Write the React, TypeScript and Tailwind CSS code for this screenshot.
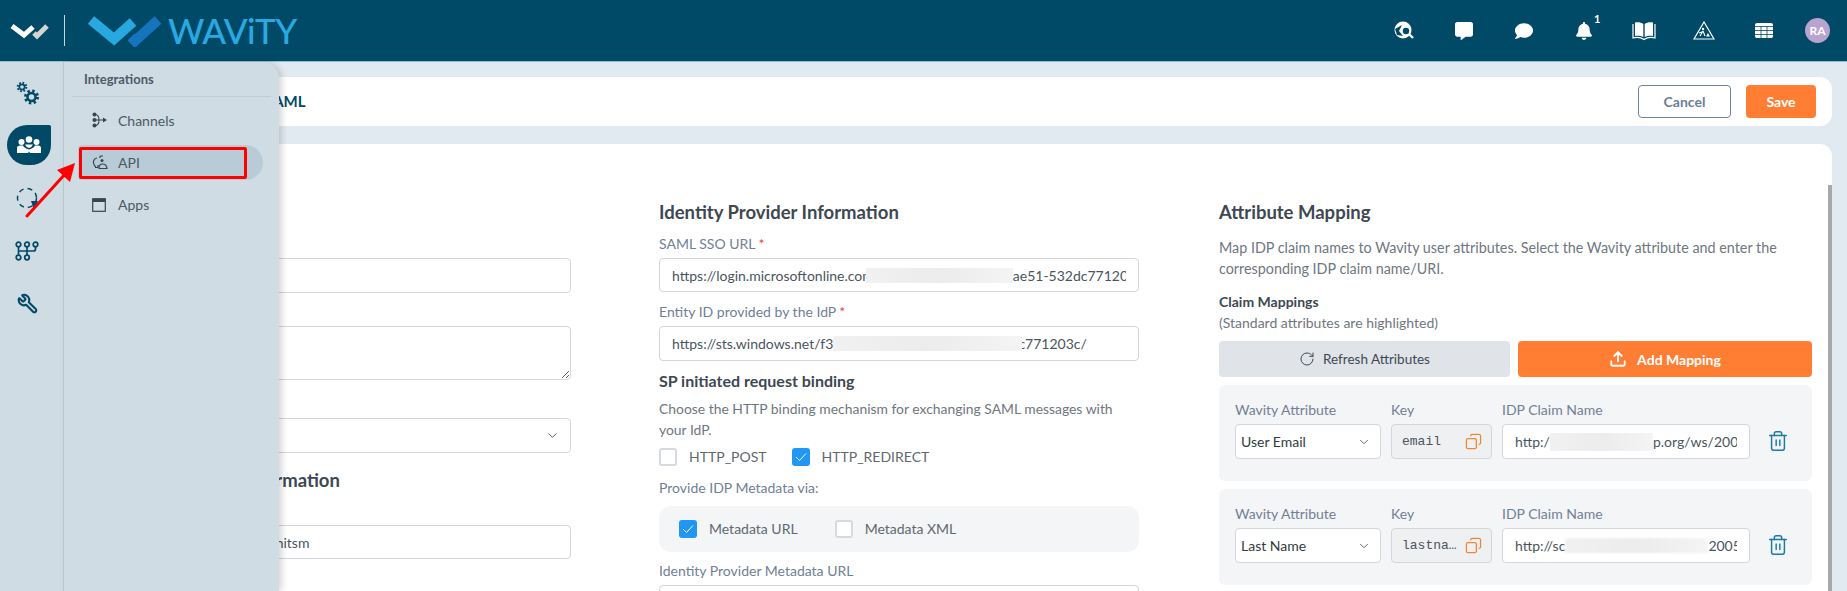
import React from "react";
import { ChevronDown, Copy, RotateCw, Trash2, Upload, Wrench } from "lucide-react";
import { FaBell, FaCommentAlt, FaComment } from "react-icons/fa";

const navy = "#004a68";

function Gear({ cx, cy, r }: { cx: number; cy: number; r: number }) {
  const teeth = 8;
  const c = 2 * Math.PI * (r + 1);
  return (
    <g fill="none" stroke={navy}>
      <circle cx={cx} cy={cy} r={r + 1} strokeWidth={r * 0.6} strokeDasharray={`${c / teeth / 2} ${c / teeth / 2}`} />
      <circle cx={cx} cy={cy} r={r * 0.8} strokeWidth={r * 0.5} />
    </g>
  );
}

function Logo() {
  return (
    <div className="flex items-center">
      <svg width="40" height="20" viewBox="0 0 40 20" className="ml-[10px]">
        <path d="M2 5 L14 14 L23 6" fill="none" stroke="#fff" strokeWidth="5" />
        <path d="M24 12 L27 15 L37 5" fill="none" stroke="#d4d4d4" strokeWidth="5" />
      </svg>
      <div className="ml-[14px] h-[31px] w-px bg-[#c9d6dc]" />
      <svg width="78" height="32" viewBox="0 0 78 32" className="ml-[22px]">
        <path d="M4 5 L27 24 L46 7" fill="none" stroke="#27a8e0" strokeWidth="10" />
        <path d="M44 22 L48 26 L71 5" fill="none" stroke="#1474bd" strokeWidth="10" />
      </svg>
      <span className="ml-[3px] font-['Lato'] text-[35px] leading-none font-medium tracking-[-0.5px] text-[#29a9e1]">WAViTY</span>
    </div>
  );
}

function TopIcons() {
  return (
    <div className="flex items-center pr-[17px] text-white">
      <div className="flex w-[60px] justify-center">
        <svg width="20" height="20" viewBox="0 0 20 20">
          <circle cx="9" cy="9" r="8.5" fill="#fff" />
          <path d="M1 8 L8 4 L5 10 L9 15 L3 14 Z" fill={navy} />
          <circle cx="12" cy="10" r="4" fill={navy} stroke="#fff" strokeWidth="1.6" />
          <path d="M15 13 L19 17" stroke="#fff" strokeWidth="2.4" />
        </svg>
      </div>
      <div className="flex w-[60px] justify-center"><FaCommentAlt size={18} /></div>
      <div className="flex w-[60px] justify-center"><FaComment size={18} /></div>
      <div className="relative flex w-[60px] justify-center">
        <FaBell size={18} />
        <span className="absolute top-[-11px] left-[40px] font-['Lato'] text-[11px] font-bold">1</span>
      </div>
      <div className="flex w-[60px] justify-center">
        <svg width="24" height="20" viewBox="0 0 24 20" fill="none">
          <path d="M1 3 V17 C5 16 9 16.500 12 18.500 C15 16.500 19 16 23 17 V3" stroke="#fff" strokeWidth="1.200" />
          <path d="M3 1.500 C6 1 9.500 1.500 11.300 3 V16 C9 14.800 6 14.500 3 15 Z M21 1.500 C18 1 14.500 1.500 12.700 3 V16 C15 14.800 18 14.500 21 15 Z" fill="#fff" />
        </svg>
      </div>
      <div className="flex w-[60px] justify-center">
        <svg width="22" height="19" viewBox="0 0 22 19" fill="none">
          <path d="M11 1 L21 18 H1 Z" stroke="#fff" strokeWidth="1.200" />
          <circle cx="10" cy="8" r="1.200" fill="#fff" />
          <path d="M10 10 L7 15 M10 10 L12 15 M9 11 L6 12" stroke="#fff" strokeWidth="1.100" />
          <path d="M13 15.500 L15 12 L17 15.500 Z" fill="#fff" />
        </svg>
      </div>
      <div className="flex w-[60px] justify-center">
        <svg width="18" height="15" viewBox="0 0 18 15">
          <rect width="18" height="15" rx="2" fill="#fff" />
          <path d="M6 3 V15 M12 3 V15 M0 3.500 H18 M0 7.500 H18 M0 11.500 H18" stroke={navy} strokeWidth="0.800" />
        </svg>
      </div>
      <div className="ml-[11px] flex h-[25px] w-[25px] items-center justify-center rounded-full bg-[#b9a3cf] font-['Lato'] text-[12px] font-bold text-white">RA</div>
    </div>
  );
}

function Rail() {
  return (
    <div className="flex w-[64px] shrink-0 flex-col items-start border-r border-[#b9cbd6] bg-[#cfdce3]">
      <svg width="24" height="26" viewBox="0 0 24 26" className="mt-[17px] ml-[16px]">
        <Gear cx={6} cy={8} r={3.300} />
        <Gear cx={15.500} cy={18} r={5} />
      </svg>
      <div className="mt-[20px] ml-[7px] flex h-[40px] w-[44px] items-center justify-center rounded-tl-[22px] rounded-tr-[2px] rounded-br-[22px] rounded-bl-[22px] bg-[#004a68]">
        <svg width="24" height="18" viewBox="0 0 24 18" fill="#fff">
          <circle cx="4.500" cy="6" r="3" />
          <circle cx="12" cy="3.500" r="3.300" />
          <circle cx="19.500" cy="6" r="3" />
          <path d="M0 17 V12 Q0 9.500 3 9.500 H6 Q7 12 12 13.500 Q17 12 18 9.500 H21 Q24 9.500 24 12 V17 H13 L12 15.500 L11 17 Z" />
          <path d="M8 8.500 H16 Q15 11 12 12 Q9 11 8 8.500 Z" />
        </svg>
      </div>
      <svg width="24" height="24" viewBox="0 0 24 24" fill="none" className="mt-[22px] ml-[16px]">
        <circle cx="11" cy="11" r="9.500" stroke={navy} strokeWidth="1.500" strokeDasharray="5 4" />
        <path d="M15 14 H22 L18 23 Z" fill={navy} />
      </svg>
      <svg width="24" height="20" viewBox="0 0 24 20" fill="none" stroke={navy} strokeWidth="1.700" className="mt-[30px] ml-[15px]">
        <circle cx="3.500" cy="3.500" r="2.300" />
        <circle cx="12" cy="3.500" r="2.300" />
        <circle cx="20.500" cy="3.500" r="2.300" />
        <circle cx="3.500" cy="16.500" r="2.300" />
        <circle cx="12" cy="16.500" r="2.300" />
        <path d="M3.500 6 V14 M12 6 V14 M20.500 6 V8 Q20.500 10 18.500 10 H3.500" />
      </svg>
      <Wrench size={21} color={navy} strokeWidth={2.400} className="mt-[32px] ml-[17px] -scale-x-100" />
    </div>
  );
}

function Flyout() {
  return (
    <div className="absolute top-0 bottom-0 left-[64px] z-10 w-[215px] rounded-tr-[16px] bg-[#cfdce3] font-['Lato'] shadow-[3px_0_6px_rgba(0,0,0,0.16)]">
      <div className="mx-[8px] h-[35px] border-b border-[#bccdd8] pt-[8px] pl-[12px] text-[13px] leading-[18px] font-bold text-[#4c5a69]">Integrations</div>
      <div className="mt-[5px] flex h-[36px] items-center pl-[28px] text-[14px] text-[#4b5866]">
        <svg width="15" height="16" viewBox="0 0 15 16" fill="#36454f">
          <circle cx="2.500" cy="2.500" r="2" />
          <circle cx="2.500" cy="8" r="2" />
          <circle cx="2.500" cy="13.500" r="2" />
          <path d="M3 2.500 Q7 2.500 7 8 Q7 13.500 3 13.500 M3 8 H13" stroke="#36454f" strokeWidth="1.100" fill="none" />
          <path d="M11 5.500 L15 8 L11 10.500 Z" />
        </svg>
        <span className="ml-[11px]">Channels</span>
      </div>
      <div className="mt-[7px] mr-[16px] ml-[14px] flex h-[35px] items-center rounded-r-[18px] rounded-l-[4px] bg-[#b9cbd6] pl-[14px] text-[14px] text-[#4b5866]">
        <svg width="16" height="15" viewBox="0 0 16 15" fill="none" stroke="#36454f" strokeWidth="1.200">
          <path d="M5 3 Q1 4 1.500 8 Q2 11 4 12" />
          <path d="M3 12.500 H6 V10" />
          <path d="M8 1 H11 M8 1 V3" />
          <circle cx="10" cy="5.500" r="1.500" fill="#36454f" stroke="none" />
          <path d="M7 13.500 Q7 9 10.500 9 Q14.500 9 15 13.500 Z" />
        </svg>
        <span className="ml-[10px]">API</span>
      </div>
      <div className="mt-[7px] flex h-[35px] items-center pl-[28px] text-[14px] text-[#4b5866]">
        <svg width="14" height="14" viewBox="0 0 14 14" fill="none" stroke="#36454f">
          <rect x="0.700" y="0.700" width="12.600" height="12.600" strokeWidth="1.200" />
          <path d="M0.700 2.500 H13.300" strokeWidth="3" />
        </svg>
        <span className="ml-[12px]">Apps</span>
      </div>
    </div>
  );
}

function Label({ children, required }: { children?: React.ReactNode; required?: boolean }) {
  return (
    <div className="h-[20px] text-[14px] leading-[20px] text-[#718096]">
      {children}
      {required && <span className="ml-[3px] text-[#e53e3e]">*</span>}
    </div>
  );
}

const inputBox = "flex items-center whitespace-nowrap rounded-[4px] border border-[#d4d6d9] bg-white px-[12px] text-[14px] text-[#4a5560]";

function Blur({ w, h = 15, soft }: { w: number; h?: number; soft?: boolean }) {
  return (
    <span
      className={`relative z-[1] inline-block shrink-0 bg-gradient-to-r from-[#f1f1f1] via-[#ececec] to-[#f4f4f4] ${soft ? "blur-[1px]" : ""}`}
      style={{ width: w, height: h }}
    />
  );
}

function Check({ on, label }: { on?: boolean; label: string }) {
  return (
    <div className="flex items-center">
      {on ? (
        <div className="flex h-[18px] w-[18px] items-center justify-center rounded-[3px] bg-[#2196f3]">
          <svg width="12" height="10" viewBox="0 0 12 10" fill="none"><path d="M1 5 L4.500 8.500 L11 1.500" stroke="#fff" strokeWidth="1" /></svg>
        </div>
      ) : (
        <div className="h-[18px] w-[18px] rounded-[3px] border-2 border-[#d5d9e0] bg-white" />
      )}
      <span className="ml-[12px] text-[14px] leading-[18px] text-[#5f6870]">{label}</span>
    </div>
  );
}

function Clip({ children }: { children: React.ReactNode }) {
  return <div className="flex min-w-0 flex-1 items-center overflow-hidden">{children}</div>;
}

function LeftColumn() {
  return (
    <div className="mr-[88px] w-[479px] shrink-0">
      <div className="h-[24px]" />
      <div className="mt-[10px] h-[20px]" />
      <div className={`mt-[4px] h-[35px] ${inputBox}`} />
      <div className="mt-[9px] h-[20px]" />
      <textarea readOnly className="mt-[4px] block h-[54px] w-full rounded-[4px] border border-[#d4d6d9] bg-white" />
      <div className="mt-[14px] h-[20px]" />
      <div className={`mt-[4px] h-[35px] justify-end ${inputBox}`}>
        <ChevronDown size={15} color="#4a5560" strokeWidth={1.500} className="-mr-[2px]" />
      </div>
      <h3 className="mt-[15px] h-[24px] pl-[12px] text-[18.500px] leading-[24px] font-bold whitespace-nowrap text-[#3d4852]">Service Provider Information</h3>
      <div className="mt-[9px] h-[20px]" />
      <div className={`mt-[4px] h-[34px] !pl-[30px] ${inputBox}`}>https://wavity.example/unitsm</div>
    </div>
  );
}

function MiddleColumn() {
  return (
    <div className="mr-[80px] w-[480px] shrink-0">
      <h3 className="h-[24px] text-[18.500px] leading-[24px] font-bold text-[#3d4852]">Identity Provider Information</h3>
      <div className="mt-[10px]"><Label required>SAML SSO URL</Label></div>
      <div className={`mt-[4px] h-[34px] ${inputBox}`}>
        <Clip>
          <span>https://login.microsoftonline.com</span>
          <span className="-ml-[8px] flex"><Blur w={147} /></span>
          <span>ae51-532dc771203c/saml2</span>
        </Clip>
      </div>
      <div className="mt-[10px]"><Label required>Entity ID provided by the IdP</Label></div>
      <div className={`mt-[4px] h-[35px] ${inputBox}`}>
        <Clip>
          <span>https://sts.windows.net/f3</span>
          <Blur w={189} />
          <span className="-ml-[4px]">c771203c/</span>
        </Clip>
      </div>
      <h4 className="mt-[8px] h-[24px] text-[16px] leading-[24px] font-bold text-[#3d4852]">SP initiated request binding</h4>
      <p className="mt-[5px] text-[13.900px] leading-[21px] text-[#6f7780]">Choose the HTTP binding mechanism for exchanging SAML messages with your IdP.</p>
      <div className="mt-[8px] flex gap-[25px]">
        <Check label="HTTP_POST" />
        <Check on label="HTTP_REDIRECT" />
      </div>
      <div className="mt-[12px]"><Label>Provide IDP Metadata via:</Label></div>
      <div className="mt-[8px] flex h-[46px] items-center gap-[37px] rounded-[12px] bg-[#f4f5f7] pl-[20px]">
        <Check on label="Metadata URL" />
        <Check label="Metadata XML" />
      </div>
      <div className="mt-[9px]"><Label>Identity Provider Metadata URL</Label></div>
      <div className={`mt-[4px] h-[35px] ${inputBox}`} />
    </div>
  );
}

function MappingCard({ attr, keyName, claim }: { attr: string; keyName: string; claim: React.ReactNode }) {
  return (
    <div className="h-[96px] rounded-[6px] bg-[#f4f5f7] px-[16px] pt-[15px]">
      <div className="flex">
        <div className="w-[146px]">
          <Label>Wavity Attribute</Label>
          <div className={`mt-[4px] h-[35px] justify-between !px-[5px] !text-[#333b42] ${inputBox}`}>
            {attr}
            <ChevronDown size={14} color="#4a5560" strokeWidth={1.500} className="mr-[4px]" />
          </div>
        </div>
        <div className="ml-[10px] w-[101px]">
          <Label>Key</Label>
          <div className={`mt-[4px] h-[35px] justify-between !bg-[#eff0f2] !px-[10px] ${inputBox}`}>
            <span className="font-['Liberation_Mono'] text-[13px]">{keyName}</span>
            <Copy size={17} color="#f58436" strokeWidth={1.800} className="-mr-[1px] -scale-x-100" />
          </div>
        </div>
        <div className="ml-[10px] w-[248px]">
          <Label>IDP Claim Name</Label>
          <div className={`mt-[4px] h-[35px] ${inputBox}`}><Clip>{claim}</Clip></div>
        </div>
        <Trash2 size={22} color="#1b7ba8" strokeWidth={1.600} className="mt-[30px] ml-[17px]" />
      </div>
    </div>
  );
}

function RightColumn() {
  return (
    <div className="w-[593px] shrink-0">
      <h3 className="h-[24px] text-[18.500px] leading-[24px] font-bold text-[#3d4852]">Attribute Mapping</h3>
      <p className="mt-[13px] text-[14.350px] leading-[21px] text-[#6f7780]">Map IDP claim names to Wavity user attributes. Select the Wavity attribute and enter the corresponding IDP claim name/URI.</p>
      <div className="mt-[12px] text-[14px] leading-[21px] font-bold text-[#3d4852]">Claim Mappings</div>
      <div className="text-[14px] leading-[21px] text-[#6f7780]">(Standard attributes are highlighted)</div>
      <div className="mt-[8px] flex gap-[8px]">
        <button className="flex h-[36px] w-[291px] items-center justify-center gap-[8px] rounded-[4px] bg-[#e0e4e9] text-[13.500px] text-[#3d4852]">
          <RotateCw size={16} strokeWidth={1.500} />
          Refresh Attributes
        </button>
        <button className="flex h-[36px] w-[294px] items-center justify-center gap-[10px] rounded-[4px] bg-[#ff7e33] text-[14px] font-bold text-white">
          <Upload size={18} strokeWidth={2.400} />
          Add Mapping
        </button>
      </div>
      <div className="mt-[8px] flex flex-col gap-[8px]">
        <MappingCard
          attr="User Email"
          keyName="email"
          claim={<><span>http:/</span><Blur w={103} h={18} /><span>p.org/ws/2005</span></>}
        />
        <MappingCard
          attr="Last Name"
          keyName="lastna…"
          claim={<><span>http://sc</span><Blur w={143} h={15} soft /><span>2005/05</span></>}
        />
      </div>
    </div>
  );
}

export default function App() {
  return (
    <div className="flex h-[591px] w-[1847px] flex-col overflow-hidden bg-[#e2eaf1] font-['Lato',sans-serif]">
      <header className="flex h-[62px] shrink-0 items-center justify-between border-b border-[#8fc0d8] bg-[#004a68]">
        <Logo />
        <TopIcons />
      </header>
      <div className="relative flex min-h-0 flex-1">
        <Rail />
        <Flyout />
        <svg width="70" height="70" viewBox="0 0 70 70" className="pointer-events-none absolute top-[95px] left-[20px] z-20">
          <path d="M7 59 L46 16" stroke="#f00" strokeWidth="3" strokeLinecap="round" />
          <path d="M55 6 L50 25 L37 13 Z" fill="#f00" />
        </svg>
        <div className="pointer-events-none absolute top-[85px] left-[79px] z-20 h-[32px] w-[168px] rounded-[2px] border-[3px] border-[#f00]" />
        <main className="flex min-w-0 flex-1 flex-col pt-[15px] pr-[15px] pl-[12px]">
          <div className="flex h-[49px] shrink-0 items-center justify-between rounded-[12px] bg-white pr-[16px] pl-[120px]">
            <span className="text-[15px] font-bold text-[#004a68]">Configure SAML</span>
            <div className="flex items-center gap-[15px]">
              <button className="h-[33px] w-[93px] rounded-[4px] border border-[#6f84a0] bg-white text-[14px] font-bold text-[#6b7f95]">Cancel</button>
              <button className="h-[33px] w-[70px] rounded-[4px] bg-[#ff7e33] text-[14px] font-bold text-white">Save</button>
            </div>
          </div>
          <div className="relative mt-[18px] flex min-h-0 flex-1 overflow-hidden rounded-t-[12px] bg-white pt-[56px] pl-[16px]">
            <LeftColumn />
            <MiddleColumn />
            <RightColumn />
            <div className="absolute top-[41px] right-0 bottom-0 w-[4px] bg-[#a8a8a8]" />
          </div>
        </main>
      </div>
    </div>
  );
}
